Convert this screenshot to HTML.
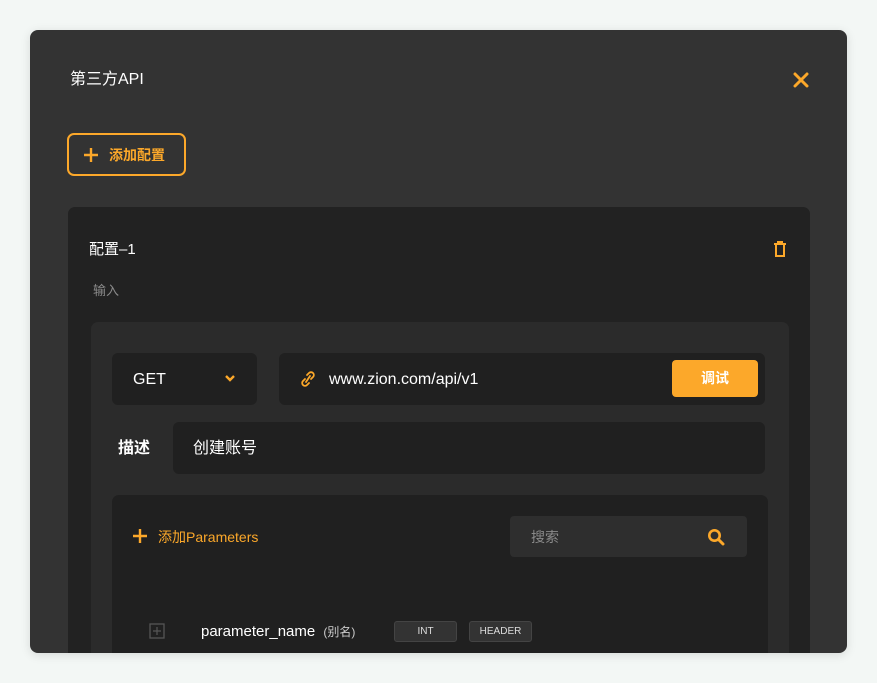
<!DOCTYPE html>
<html><head><meta charset="utf-8"><style>
*{box-sizing:border-box;margin:0;padding:0}
body{width:877px;height:683px;background:#f3f7f5;font-family:"Liberation Sans","Noto Sans CJK SC",sans-serif;position:relative;overflow:hidden}
.a{position:absolute}
.dlg{left:30px;top:30px;width:817px;height:623px;background:#333;border-radius:8px;overflow:hidden;box-shadow:0 2px 10px rgba(0,0,0,.12)}
.t{color:#fff}
.or{color:#fca82a}
</style></head><body>
<div class="a dlg">
  <div class="a t" style="left:40px;top:40px;font-size:16px;line-height:20px">第三方API</div>
  <svg class="a" style="left:763px;top:42px" width="16" height="16" viewBox="0 0 16 16"><path d="M2 2L14 14M14 2L2 14" stroke="#fca82a" stroke-width="3" stroke-linecap="round"/></svg>
  <div class="a" style="left:37px;top:103px;width:119px;height:43px;border:2px solid #fca82a;border-radius:7px"></div>
  <svg class="a" style="left:53px;top:117px" width="16" height="16" viewBox="0 0 16 16"><path d="M8 1V15M1 8H15" stroke="#fca82a" stroke-width="2.4"/></svg>
  <div class="a or" style="left:79px;top:116px;font-size:14px;font-weight:bold;line-height:18px">添加配置</div>

  <div class="a" style="left:38px;top:177px;width:742px;height:460px;background:#222;border-radius:7px">
    <div class="a t" style="left:21px;top:33px;font-size:15px;line-height:20px">配置–1</div>
    <svg class="a" style="left:705px;top:34px" width="14" height="16" viewBox="0 0 14 16"><path d="M1 3H13M5 3V1H9V3M3 3V15H11V3" stroke="#fca82a" stroke-width="2" fill="none"/></svg>
    <div class="a" style="left:25px;top:75px;font-size:13px;color:#8a8a8a;line-height:18px">输入</div>

    <div class="a" style="left:23px;top:115px;width:698px;height:360px;background:#2b2b2b;border-radius:7px">
      <div class="a" style="left:21px;top:31px;width:145px;height:52px;background:#202020;border-radius:6px"></div>
      <div class="a t" style="left:42px;top:48px;font-size:16px;line-height:20px">GET</div>
      <svg class="a" style="left:133px;top:52px" width="12" height="10" viewBox="0 0 12 10"><path d="M2 2L6 6L10 2" stroke="#fca82a" stroke-width="2.4" fill="none"/></svg>
      <div class="a" style="left:188px;top:31px;width:486px;height:52px;background:#202020;border-radius:6px"></div>
      <svg class="a" style="left:209px;top:48px" width="16" height="18" viewBox="0 0 16 18"><g stroke="#fca82a" stroke-width="1.8" fill="none" stroke-linecap="round"><path d="M7 5L9 3A2.5 2.5 0 0 1 13 7L11 9"/><path d="M9 13L7 15A2.5 2.5 0 0 1 3 11L5 9"/><path d="M6 12L10 6"/></g></svg>
      <div class="a t" style="left:238px;top:48px;font-size:16px;line-height:20px">www.zion.com/api/v1</div>
      <div class="a" style="left:581px;top:38px;width:86px;height:37px;background:#fca82a;border-radius:4px;color:#fff;font-size:14px;font-weight:bold;text-align:center;line-height:37px">调试</div>

      <div class="a t" style="left:27px;top:117px;font-size:16px;font-weight:bold;line-height:20px">描述</div>
      <div class="a" style="left:82px;top:100px;width:592px;height:52px;background:#202020;border-radius:6px"></div>
      <div class="a t" style="left:102px;top:117px;font-size:16px;line-height:20px">创建账号</div>

      <div class="a" style="left:21px;top:173px;width:656px;height:250px;background:#202020;border-radius:7px">
        <svg class="a" style="left:20px;top:33px" width="16" height="16" viewBox="0 0 16 16"><path d="M8 1V15M1 8H15" stroke="#fca82a" stroke-width="2.4"/></svg>
        <div class="a or" style="left:46px;top:33px;font-size:14px;line-height:18px">添加Parameters</div>
        <div class="a" style="left:398px;top:21px;width:237px;height:41px;background:#2e2e2e;border-radius:4px"></div>
        <div class="a" style="left:419px;top:33px;font-size:14px;color:#8a8a8a;line-height:18px">搜索</div>
        <svg class="a" style="left:595px;top:33px" width="18" height="18" viewBox="0 0 18 18"><circle cx="7.5" cy="7.5" r="5.2" stroke="#fca82a" stroke-width="2.6" fill="none"/><path d="M11.5 11.5L16 16" stroke="#fca82a" stroke-width="3" stroke-linecap="round"/></svg>
        <svg class="a" style="left:37px;top:128px" width="16" height="16" viewBox="0 0 16 16"><rect x="1" y="1" width="14" height="14" fill="none" stroke="#555" stroke-width="1.3"/><path d="M8 4V12M4 8H12" stroke="#555" stroke-width="1.2"/></svg>
        <div class="a t" style="left:89px;top:127px;font-size:15px;line-height:20px">parameter_name <span style="font-size:12px;color:#ccc;margin-left:4px">(别名)</span></div>
        <div class="a" style="left:282px;top:126px;width:63px;height:21px;background:#333;border:1px solid #444;border-radius:3px;color:#ddd;font-size:10px;text-align:center;line-height:19px">INT</div>
        <div class="a" style="left:357px;top:126px;width:63px;height:21px;background:#333;border:1px solid #444;border-radius:3px;color:#ddd;font-size:10px;text-align:center;line-height:19px">HEADER</div>
      </div>
    </div>
  </div>
</div>
</body></html>
